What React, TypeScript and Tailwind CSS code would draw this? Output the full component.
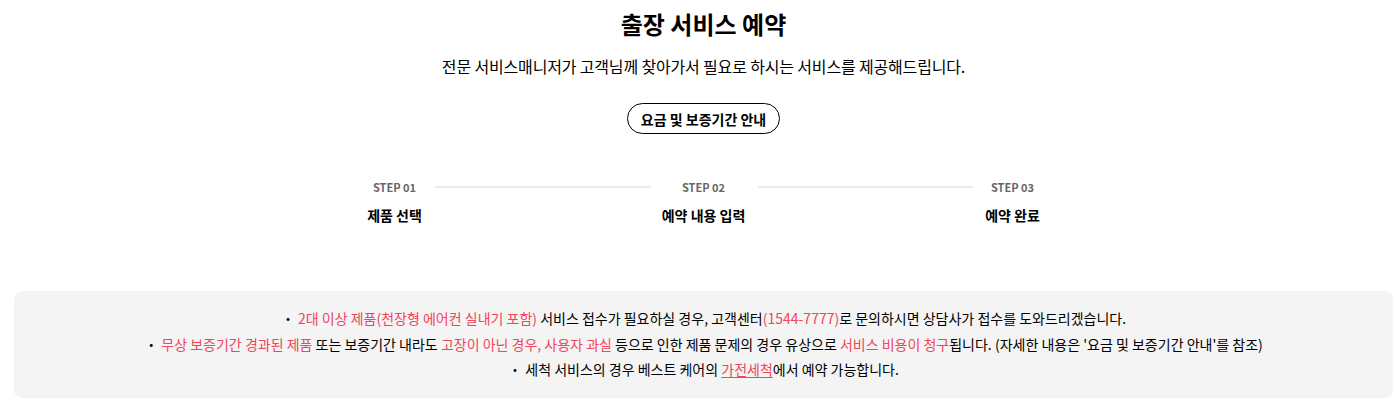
import React from "react";

function Red({ children }: { children: React.ReactNode }) {
  return <span className="text-[#f2445b]">{children}</span>;
}

function Step({ no, label }: { no: string; label: string }) {
  return (
    <div className="flex flex-col items-center w-[80px] shrink-0 whitespace-nowrap">
      <span className="text-[11px] leading-[16px] font-bold text-[#666]">{no}</span>
      <span className="mt-[10px] text-[14px] leading-[20px] font-bold">{label}</span>
    </div>
  );
}

export default function App() {
  return (
    <div
      className="w-[1394px] h-[405px] bg-white text-black pl-[14px] pr-[1px] overflow-hidden"
      style={{ fontFamily: '"Noto Sans CJK KR", "Noto Sans", sans-serif' }}
    >
      {/* Header */}
      <div className="flex flex-col items-center">
        <h1 className="mt-[6px] text-[24px] leading-[36px] font-bold">출장 서비스 예약</h1>
        <p className="mt-[13px] text-[16px] leading-[22px] tracking-[-0.01em]">
          전문 서비스매니저가 고객님께 찾아가서 필요로 하시는 서비스를 제공해드립니다.
        </p>
        <button className="mt-[26px] h-[31px] px-[13px] rounded-full border border-black text-[14px] font-bold leading-none">
          요금 및 보증기간 안내
        </button>
      </div>

      {/* Steps */}
      <div className="mt-[45px] mx-auto w-[698px] flex items-start">
        <Step no="STEP 01" label="제품 선택" />
        <div className="w-[216px] h-[2px] bg-[#ebebeb] mt-[7px] shrink-0" />
        <div className="ml-[13px] shrink-0">
          <Step no="STEP 02" label="예약 내용 입력" />
        </div>
        <div className="ml-[14px] w-[215px] h-[2px] bg-[#ebebeb] mt-[7px] shrink-0" />
        <Step no="STEP 03" label="예약 완료" />
      </div>

      {/* Notice */}
      <div className="mt-[66px] bg-[#f4f4f4] rounded-[8px] h-[107px] flex flex-col items-center justify-center text-[14px] leading-[25.5px]">
        <p>
          ・ <Red>2대 이상 제품(천장형 에어컨 실내기 포함)</Red> 서비스 접수가 필요하실 경우, 고객센터<Red>(1544-7777)</Red>로 문의하시면 상담사가 접수를 도와드리겠습니다.
        </p>
        <p>
          ・ <Red>무상 보증기간 경과된 제품</Red> 또는 보증기간 내라도 <Red>고장이 아닌 경우, 사용자 과실</Red> 등으로 인한 제품 문제의 경우 유상으로 <Red>서비스 비용이 청구</Red>됩니다. (자세한 내용은 '요금 및 보증기간 안내'를 참조)
        </p>
        <p>
          ・ 세척 서비스의 경우 베스트 케어의 <a className="text-[#f2445b] underline underline-offset-2">가전세척</a>에서 예약 가능합니다.
        </p>
      </div>
    </div>
  );
}
